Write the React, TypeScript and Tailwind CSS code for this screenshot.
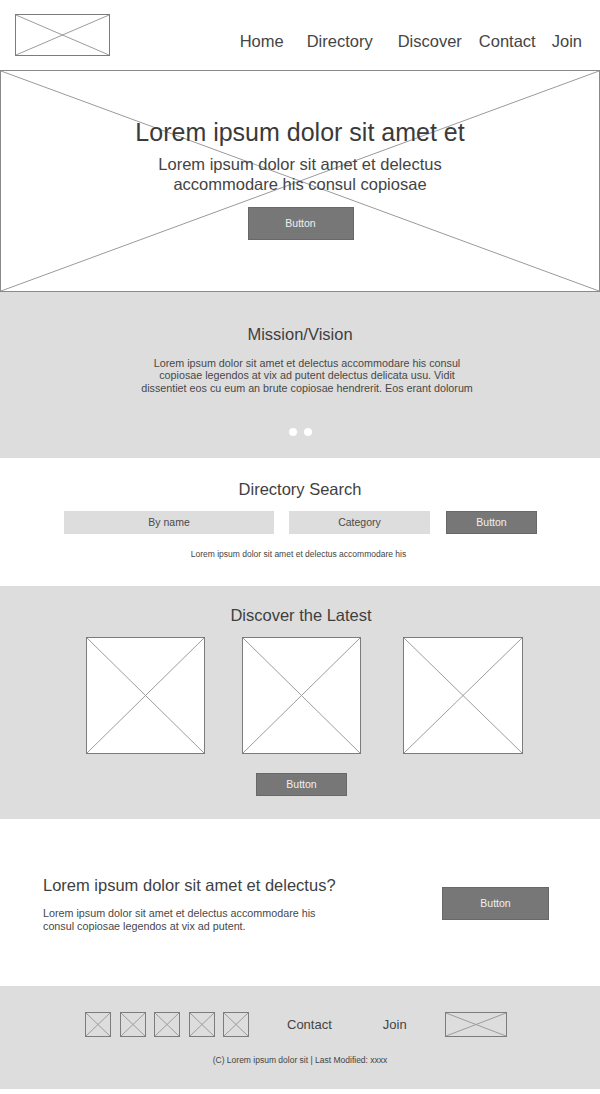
import clsx from "clsx";

// placeholder box with a cross drawn corner to corner
function XBox({ className, fill = "bg-transparent" }: { className?: string; fill?: string }) {
  return (
    <div className={clsx("relative shrink-0 border border-[#7c7c7c]", fill, className)}>
      <svg className="absolute inset-0 h-full w-full" viewBox="0 0 100 100" preserveAspectRatio="none">
        <line x1="0" y1="0" x2="100" y2="100" stroke="#9c9c9c" strokeWidth="1" vectorEffect="non-scaling-stroke" />
        <line x1="100" y1="0" x2="0" y2="100" stroke="#9c9c9c" strokeWidth="1" vectorEffect="non-scaling-stroke" />
      </svg>
    </div>
  );
}

function GrayButton({ className, text = "text-[10.5px]" }: { className?: string; text?: string }) {
  return (
    <div
      className={clsx(
        "flex items-center justify-center border border-[#686868] bg-[#777777] text-[#f0f0f0]",
        text,
        className
      )}
    >
      Button
    </div>
  );
}

export default function App() {
  return (
    <div className="w-[600px] bg-white font-['Liberation_Sans',Arial,sans-serif] text-[#3f3f3f]">
      {/* header */}
      <header className="flex h-[70px] items-start">
        <XBox className="ml-[15px] mt-[14px] h-[42px] w-[95px]" fill="bg-white" />
        <nav className="ml-auto flex pr-[18px] pt-[32px] text-[16.5px] leading-[19px] text-[#454545]">
          <span>Home</span>
          <span className="ml-[23px]">Directory</span>
          <span className="ml-[25px]">Discover</span>
          <span className="ml-[17px]">Contact</span>
          <span className="ml-[16px]">Join</span>
        </nav>
      </header>

      {/* hero */}
      <section className="relative h-[222px] border border-[#8a8a8a]">
        <svg className="absolute inset-0 h-full w-full" viewBox="0 0 100 100" preserveAspectRatio="none">
          <line x1="0" y1="0" x2="100" y2="100" stroke="#9a9a9a" strokeWidth="1" vectorEffect="non-scaling-stroke" />
          <line x1="100" y1="0" x2="0" y2="100" stroke="#9a9a9a" strokeWidth="1" vectorEffect="non-scaling-stroke" />
        </svg>
        <div className="relative flex flex-col items-center pt-[46px]">
          <h1 className="text-[25px] leading-[30px] text-[#3a3a3a]">Lorem ipsum dolor sit amet et</h1>
          <p className="mt-[8px] text-center text-[16.5px] leading-[19.5px] text-[#444]">
            Lorem ipsum dolor sit amet et delectus
            <br />
            accommodare his consul copiosae
          </p>
          <GrayButton className="ml-[1px] mt-[13px] h-[33px] w-[106px]" />
        </div>
      </section>

      {/* mission */}
      <section className="flex h-[166px] flex-col items-center bg-[#dddddd] pt-[32px]">
        <h2 className="text-[16.5px] leading-[20px]">Mission/Vision</h2>
        <p className="ml-[14px] mt-[12.5px] text-center text-[10.75px] leading-[12.5px] text-[#484848]">
          Lorem ipsum dolor sit amet et delectus accommodare his consul
          <br />
          copiosae legendos at vix ad putent delectus delicata usu. Vidit
          <br />
          dissentiet eos cu eum an brute copiosae hendrerit. Eos erant dolorum
        </p>
        <div className="ml-[1px] mt-[34px] flex gap-[7px]">
          <span className="h-[8px] w-[8px] rounded-full bg-white" />
          <span className="h-[8px] w-[8px] rounded-full bg-white" />
        </div>
      </section>

      {/* directory search */}
      <section className="flex h-[128px] flex-col pt-[21px]">
        <h2 className="text-center text-[16.5px] leading-[20px]">Directory Search</h2>
        <div className="mt-[12px] flex pl-[64px] text-[10.5px] text-[#4a4a4a]">
          <div className="flex h-[23px] w-[210px] items-center justify-center bg-[#dddddd]">By name</div>
          <div className="ml-[15px] flex h-[23px] w-[141px] items-center justify-center bg-[#dddddd]">Category</div>
          <GrayButton className="ml-[16px] h-[23px] w-[91px]" />
        </div>
        <p className="ml-[-3px] mt-[15px] text-center text-[8.5px] leading-[10px] text-[#444]">
          Lorem ipsum dolor sit amet et delectus accommodare his
        </p>
      </section>

      {/* discover */}
      <section className="flex h-[233px] flex-col bg-[#dddddd] pt-[19px]">
        <h2 className="ml-[2px] text-center text-[16.5px] leading-[20px]">Discover the Latest</h2>
        <div className="mt-[12px] flex pl-[86px]">
          <XBox className="h-[117px] w-[119px]" fill="bg-white" />
          <XBox className="ml-[37px] h-[117px] w-[119px]" fill="bg-white" />
          <XBox className="ml-[42px] h-[117px] w-[120px]" fill="bg-white" />
        </div>
        <div className="mt-[19px] flex pl-[256px]">
          <GrayButton className="h-[23px] w-[91px]" />
        </div>
      </section>

      {/* call to action */}
      <section className="flex h-[167px] items-center justify-between pl-[43px] pr-[51px] pt-[2px]">
        <div>
          <h2 className="text-[16.5px] leading-[20px]">Lorem ipsum dolor sit amet et delectus?</h2>
          <p className="mt-[12px] text-[10.75px] leading-[13px] text-[#484848]">
            Lorem ipsum dolor sit amet et delectus accommodare his
            <br />
            consul copiosae legendos at vix ad putent.
          </p>
        </div>
        <GrayButton className="h-[33px] w-[107px]" />
      </section>

      {/* footer */}
      <footer className="flex h-[103px] flex-col bg-[#dddddd] pt-[26px]">
        <div className="flex items-center pl-[85px]">
          <div className="flex gap-[8.5px]">
            <XBox className="h-[25px] w-[26px]" />
            <XBox className="h-[25px] w-[26px]" />
            <XBox className="h-[25px] w-[26px]" />
            <XBox className="h-[25px] w-[26px]" />
            <XBox className="h-[25px] w-[26px]" />
          </div>
          <span className="ml-[38px] text-[13px] leading-[16px] text-[#444]">Contact</span>
          <span className="ml-[51px] text-[13px] leading-[16px] text-[#444]">Join</span>
          <XBox className="ml-[38px] h-[25px] w-[62px]" />
        </div>
        <p className="mt-[18px] text-center text-[8.5px] leading-[10px] text-[#444]">
          (C) Lorem ipsum dolor sit | Last Modified: xxxx
        </p>
      </footer>
      <div className="h-[5px]" />
    </div>
  );
}
